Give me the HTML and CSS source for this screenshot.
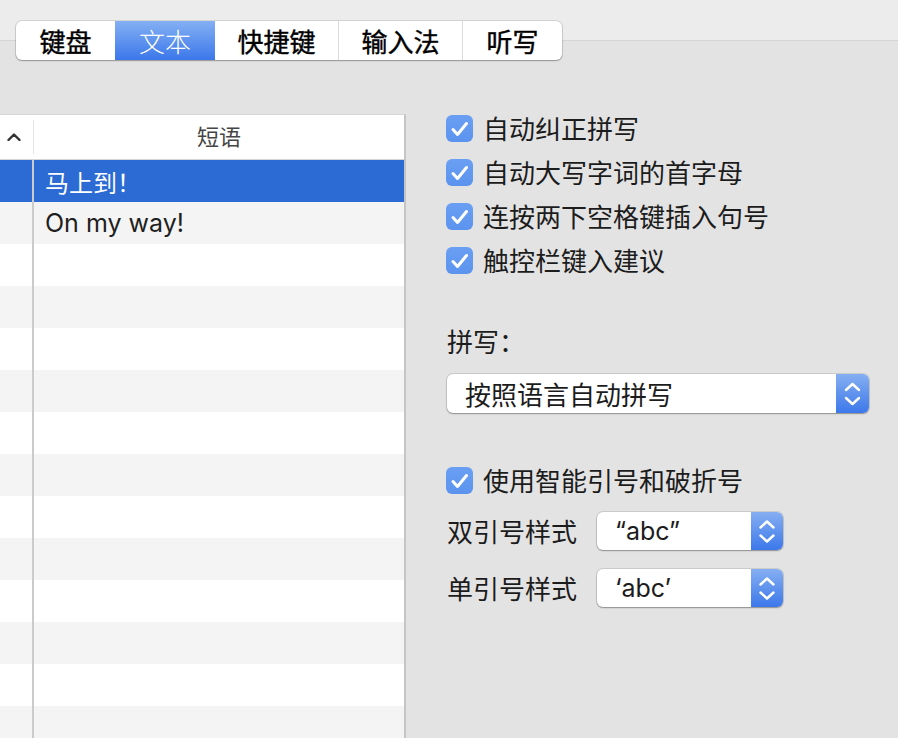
FILE: index.html
```html
<!DOCTYPE html>
<html lang="zh-CN">
<head>
<meta charset="utf-8">
<title>文本</title>
<link rel="stylesheet" href="styles.css">
</head>
<body>
<div class="window">
  <nav class="tabs">
    <div class="tab t1">键盘</div>
    <div class="tab t2 active">文本</div>
    <div class="tab t3">快捷键</div>
    <div class="tab t4 sep">输入法</div>
    <div class="tab t5 sep">听写</div>
  </nav>
  <div class="main">
    <section class="table">
      <div class="thead">
        <div class="hc1"><svg class="sort" width="14" height="8" viewBox="0 0 14 8"><polyline points="1.5,7 7,1.5 12.5,7" fill="none" stroke="#333" stroke-width="2.4" stroke-linecap="round" stroke-linejoin="round"/></svg></div>
        <div class="hc2">短语</div>
      </div>
      <div class="tbody">
        <div class="row sel"><div class="c1"></div><div class="c2 cjk">马上到！</div></div>
        <div class="row"><div class="c1"></div><div class="c2">On my way!</div></div>
        <div class="row"><div class="c1"></div><div class="c2"></div></div>
        <div class="row"><div class="c1"></div><div class="c2"></div></div>
        <div class="row"><div class="c1"></div><div class="c2"></div></div>
        <div class="row"><div class="c1"></div><div class="c2"></div></div>
        <div class="row"><div class="c1"></div><div class="c2"></div></div>
        <div class="row"><div class="c1"></div><div class="c2"></div></div>
        <div class="row"><div class="c1"></div><div class="c2"></div></div>
        <div class="row"><div class="c1"></div><div class="c2"></div></div>
        <div class="row"><div class="c1"></div><div class="c2"></div></div>
        <div class="row"><div class="c1"></div><div class="c2"></div></div>
        <div class="row"><div class="c1"></div><div class="c2"></div></div>
        <div class="row"><div class="c1"></div><div class="c2"></div></div>
      </div>
    </section>
    <section class="prefs">
      <div class="check">
        <span class="box"><svg width="27" height="27" viewBox="0 0 27 27"><polyline points="7,14.5 11.5,19.5 20.5,8.5" fill="none" stroke="#fff" stroke-width="3" stroke-linecap="round" stroke-linejoin="round"/></svg></span>
        <span>自动纠正拼写</span>
      </div>
      <div class="check">
        <span class="box"><svg width="27" height="27" viewBox="0 0 27 27"><polyline points="7,14.5 11.5,19.5 20.5,8.5" fill="none" stroke="#fff" stroke-width="3" stroke-linecap="round" stroke-linejoin="round"/></svg></span>
        <span>自动大写字词的首字母</span>
      </div>
      <div class="check">
        <span class="box"><svg width="27" height="27" viewBox="0 0 27 27"><polyline points="7,14.5 11.5,19.5 20.5,8.5" fill="none" stroke="#fff" stroke-width="3" stroke-linecap="round" stroke-linejoin="round"/></svg></span>
        <span>连按两下空格键插入句号</span>
      </div>
      <div class="check">
        <span class="box"><svg width="27" height="27" viewBox="0 0 27 27"><polyline points="7,14.5 11.5,19.5 20.5,8.5" fill="none" stroke="#fff" stroke-width="3" stroke-linecap="round" stroke-linejoin="round"/></svg></span>
        <span>触控栏键入建议</span>
      </div>

      <div class="section-label">拼写：</div>
      <div class="popup wide">
        <div class="popup-text">按照语言自动拼写</div>
        <div class="popup-btn"><svg width="33" height="39" viewBox="0 0 33 39"><polyline points="10,16 16.5,10 23,16" fill="none" stroke="#fff" stroke-width="2.4" stroke-linecap="round" stroke-linejoin="round"/><polyline points="10,24 16.5,30 23,24" fill="none" stroke="#fff" stroke-width="2.4" stroke-linecap="round" stroke-linejoin="round"/></svg></div>
      </div>

      <div class="check smart">
        <span class="box"><svg width="27" height="27" viewBox="0 0 27 27"><polyline points="7,14.5 11.5,19.5 20.5,8.5" fill="none" stroke="#fff" stroke-width="3" stroke-linecap="round" stroke-linejoin="round"/></svg></span>
        <span>使用智能引号和破折号</span>
      </div>
      <div class="quote-row first">
        <span class="lbl">双引号样式</span>
        <div class="popup small">
          <div class="popup-text latin">“abc”</div>
          <div class="popup-btn"><svg width="32" height="38" viewBox="0 0 32 38"><polyline points="9.5,15.5 16,9.5 22.5,15.5" fill="none" stroke="#fff" stroke-width="2.4" stroke-linecap="round" stroke-linejoin="round"/><polyline points="9.5,23.5 16,29.5 22.5,23.5" fill="none" stroke="#fff" stroke-width="2.4" stroke-linecap="round" stroke-linejoin="round"/></svg></div>
        </div>
      </div>
      <div class="quote-row second">
        <span class="lbl">单引号样式</span>
        <div class="popup small">
          <div class="popup-text latin">‘abc’</div>
          <div class="popup-btn"><svg width="32" height="38" viewBox="0 0 32 38"><polyline points="9.5,15.5 16,9.5 22.5,15.5" fill="none" stroke="#fff" stroke-width="2.4" stroke-linecap="round" stroke-linejoin="round"/><polyline points="9.5,23.5 16,29.5 22.5,23.5" fill="none" stroke="#fff" stroke-width="2.4" stroke-linecap="round" stroke-linejoin="round"/></svg></div>
        </div>
      </div>
    </section>
  </div>
</div>
</body>
</html>
```
FILE: styles.css
```css
* { box-sizing: border-box; }
body { margin: 0; }
.window {
  width: 898px;
  height: 738px;
  overflow: hidden;
  padding-top: 21px;
  background: linear-gradient(#ececec 0 40px, #d5d5d5 40px 41px, #e3e3e3 41px);
  font-family: "Noto Sans CJK SC", sans-serif;
  color: #1c1c1c;
}
.tabs {
  display: flex;
  width: 546px;
  height: 39px;
  margin-left: 16px;
  background: #fff;
  border-radius: 6px;
  overflow: hidden;
  box-shadow: 0 0 0 1px rgba(0,0,0,0.10), 0 1px 1.5px rgba(0,0,0,0.28);
}
.tab {
  display: flex;
  align-items: center;
  justify-content: center;
  font-size: 26px;
  font-weight: 400;
  line-height: 1;
  color: #000;
  -webkit-text-stroke: 0.4px #000;
}
.t1 { width: 99px; }
.t2 { width: 100px; }
.t3 { width: 123px; }
.t4 { width: 124px; }
.t5 { width: 100px; }
.tab.sep { border-left: 1px solid #dcdcdc; }
.tab.active {
  background: linear-gradient(#84b0f3, #3b77ea);
  color: #fff;
  font-weight: 300;
  -webkit-text-stroke: 0;
}
.main {
  display: flex;
  margin-top: 54px;
}
.table {
  width: 406px;
  flex: none;
  background: #fff;
  border-top: 1px solid #d7d7d7;
  border-right: 2px solid #c5c5c5;
}
.thead {
  display: flex;
  align-items: center;
  height: 45px;
  border-bottom: 1px solid #d4d4d4;
}
.hc1 {
  width: 34px;
  height: 34px;
  padding-left: 7px;
  display: flex;
  align-items: center;
  border-right: 1px solid #e4e4e4;
}
.hc2 {
  flex: 1;
  text-align: center;
  font-size: 22px;
  line-height: 1;
  color: #454545;
  padding-bottom: 4px;
}
.row {
  display: flex;
  height: 42px;
}
.tbody .row:nth-child(even) { background: #f4f4f4; }
.row .c1 {
  width: 34px;
  flex: none;
  border-right: 2px solid #cbcbcb;
}
.row .c2 {
  flex: 1;
  display: flex;
  align-items: center;
  padding-left: 11px;
  font-family: Inter, "Noto Sans CJK SC", sans-serif;
  font-size: 25px;
  color: #1f1f1f;
}
.row .c2.cjk { font-family: "Noto Sans CJK SC", sans-serif; font-size: 24px; }
.row.sel { background: #2b6bd3; }
.row.sel .c2 { color: #fff; }
.prefs {
  margin-left: 40px;
  display: flex;
  flex-direction: column;
  font-size: 26px;
  line-height: 28px;
}
.check {
  display: flex;
  align-items: center;
  gap: 10px;
  height: 28px;
}
.check + .check { margin-top: 16px; }
.box {
  width: 27px;
  height: 27px;
  flex: none;
  border-radius: 6px;
  background: linear-gradient(#6a9ff3, #5b93ee);
  display: flex;
}
.section-label {
  margin-top: 54px;
  line-height: 26px;
  margin-left: 1px;
}
.popup {
  display: flex;
  background: #fff;
  border-radius: 6px;
  box-shadow: 0 0 0 1px rgba(0,0,0,0.10), 0 1px 1.5px rgba(0,0,0,0.30);
}
.popup.wide {
  margin-top: 20px;
  margin-left: 1px;
  width: 422px;
  height: 39px;
}
.popup.small {
  width: 186px;
  height: 38px;
}
.popup-text {
  flex: 1;
  display: flex;
  align-items: center;
  padding-left: 18px;
}
.popup-text.latin {
  font-family: Inter, "Noto Sans CJK SC", sans-serif;
  font-size: 25px;
}
.popup-btn {
  flex: none;
  display: flex;
  border-radius: 0 6px 6px 0;
  background: linear-gradient(#86aff2, #3c78ea);
}
.check.smart { margin-top: 53px; }
.quote-row {
  display: flex;
  align-items: center;
}
.quote-row.first { margin-top: 18px; }
.quote-row.second { margin-top: 19px; }
.lbl {
  width: 151px;
  flex: none;
  padding-left: 1px;
}
```
